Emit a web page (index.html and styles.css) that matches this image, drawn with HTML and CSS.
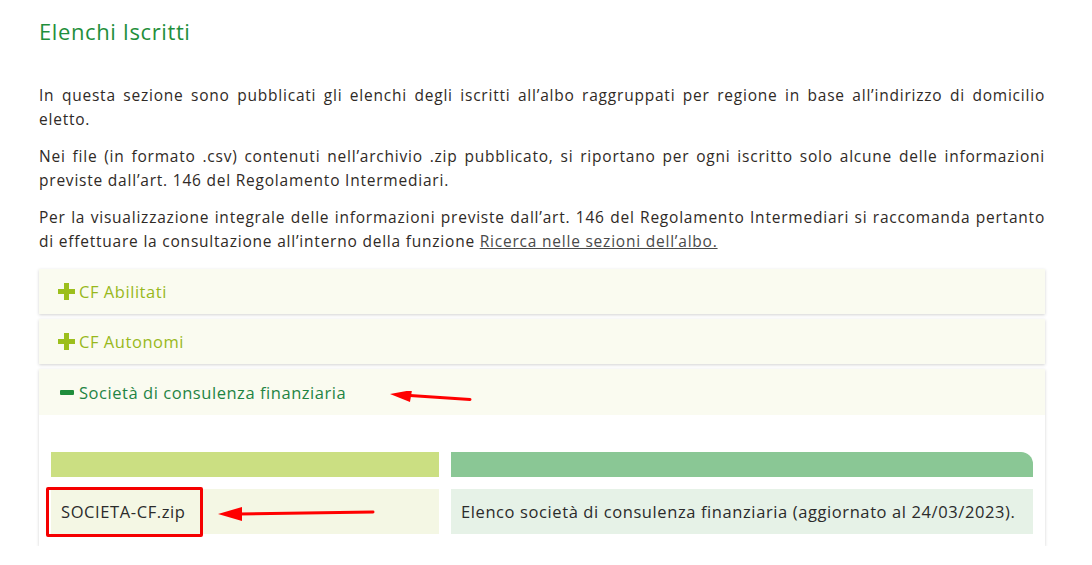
FILE: index.html
```html
<!DOCTYPE html>
<html lang="it">
<head>
<meta charset="utf-8">
<title>Elenchi Iscritti</title>
<link rel="stylesheet" href="styles.css">
</head>
<body>
<main class="page">
  <h1 class="title">Elenchi Iscritti</h1>
  <p class="text">In questa sezione sono pubblicati gli elenchi degli iscritti all’albo raggruppati per regione in base all’indirizzo di domicilio eletto.</p>
  <p class="text">Nei file (in formato .csv) contenuti nell’archivio .zip pubblicato, si riportano per ogni iscritto solo alcune delle informazioni previste dall’art. 146 del Regolamento Intermediari.</p>
  <p class="text">Per la visualizzazione integrale delle informazioni previste dall’art. 146 del Regolamento Intermediari si raccomanda pertanto di effettuare la consultazione all’interno della funzione <a class="link" href="#">Ricerca nelle sezioni dell’albo.</a></p>

  <div class="accordion">
    <section class="panel">
      <div class="panel-head closed">
        <svg class="icon" width="17" height="17" viewBox="0 0 17 17"><path d="M6 0h5v6h6v5h-6v6H6v-6H0V6h6z" fill="#9cbf1c"/></svg>
        <span>CF Abilitati</span>
      </div>
    </section>
    <section class="panel">
      <div class="panel-head closed">
        <svg class="icon" width="17" height="17" viewBox="0 0 17 17"><path d="M6 0h5v6h6v5h-6v6H6v-6H0V6h6z" fill="#9cbf1c"/></svg>
        <span>CF Autonomi</span>
      </div>
    </section>
    <section class="panel">
      <div class="panel-head open">
        <svg class="icon" width="15" height="17" viewBox="0 0 15 17"><rect x="0" y="6" width="14" height="5" rx="1" fill="#1f8d3c"/></svg>
        <span>Società di consulenza finanziaria</span>
        <svg class="arrow arrow-top" width="84" height="14" viewBox="0 0 84 14"><path d="M82 8.5 L22 4.5" stroke="#f00" stroke-width="3" stroke-linecap="round"/><path d="M2 3 L24 -1 L22 11 Z" fill="#f00"/></svg>
      </div>
      <div class="panel-body">
        <div class="table">
          <div class="th th-left"></div>
          <div class="th th-right"></div>
          <div class="td td-left">
            <span class="file">SOCIETA-CF.zip</span>
            <svg class="arrow arrow-file" width="160" height="16" viewBox="0 0 160 16"><path d="M156 6 L22 8" stroke="#f00" stroke-width="3" stroke-linecap="round"/><path d="M1 8 L25 1 L25 15 Z" fill="#f00"/></svg>
          </div>
          <div class="td td-right">Elenco società di consulenza finanziaria (aggiornato al 24/03/2023).</div>
        </div>
      </div>
    </section>
  </div>
</main>
</body>
</html>
```

FILE: styles.css
```css
* { box-sizing: border-box; }

html, body {
  margin: 0;
  padding: 0;
  background: #fff;
}

body {
  font-family: "Open Sans", "Noto Sans", sans-serif;
  color: #2f2a26;
}

.page {
  width: 1006px;
  margin-left: 39px;
  padding-top: 17px;
}

.title {
  margin: 0 0 38px;
  font-size: 22px;
  font-weight: 400;
  line-height: 28px;
  color: #1f8f3c;
  letter-spacing: 0.6px;
}

.text {
  margin: 0 0 13px;
  font-size: 15.5px;
  line-height: 24px;
  letter-spacing: 0.78px;
  text-align: justify;
}

.link {
  color: #4a4a4a;
  text-decoration: underline;
}

.accordion {
  margin-top: 16px;
  display: flex;
  flex-direction: column;
  gap: 5px;
}

.panel {
  background: #fff;
  box-shadow: 0 1px 3px rgba(0, 0, 0, 0.18);
}

.panel-head {
  position: relative;
  height: 45px;
  display: flex;
  align-items: center;
  gap: 4px;
  padding-left: 19px;
  background: #fafbf0;
  font-size: 16.5px;
  letter-spacing: 0.55px;
}

.panel-head.closed { color: #98b81c; }
.panel-head.open { color: #1f8444; padding-left: 21px; height: 46px; }

.icon { flex: none; }

.arrow { position: absolute; }
.arrow-top { left: 349px; top: 22px; }

.panel-body {
  padding: 37px 12px 12px;
}

.table {
  display: grid;
  grid-template-columns: 388px 1fr;
  grid-template-rows: 25px 45px;
  column-gap: 12px;
  row-gap: 12px;
}

.th-left { background: #cbdf82; }
.th-right { background: #8ac795; border-top-right-radius: 12px; }

.td {
  display: flex;
  align-items: center;
  font-size: 16.5px;
  letter-spacing: 0.6px;
  color: #2b2b2b;
}

.td-left {
  position: relative;
  background: #f4f7e4;
}

.td-right {
  background: #e6f2e7;
  padding-left: 10px;
}

.file {
  margin-left: -5px;
  padding: 0 14px 0 12px;
  height: 50px;
  display: flex;
  align-items: center;
  border: 3px solid #f50000;
  border-radius: 2px;
}

.arrow-file { left: 166px; top: 17px; }
```
